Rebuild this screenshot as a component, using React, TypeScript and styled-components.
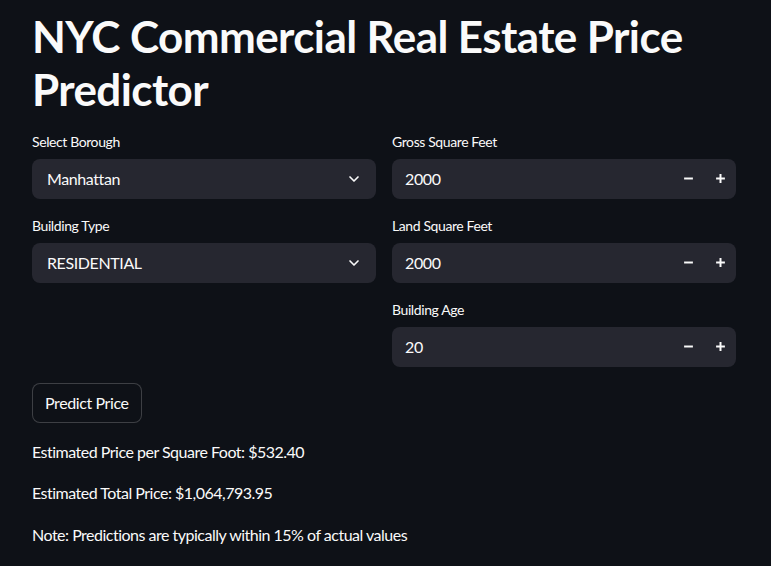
import styled, { createGlobalStyle } from "styled-components";

const GlobalStyle = createGlobalStyle`
  html, body {
    margin: 0;
    padding: 0;
    background: #0e1117;
  }
  body {
    font-family: "Source Sans Pro", Lato, "Noto Sans", sans-serif;
    color: #fafafa;
  }
`;

const Main = styled.main`
  width: 771px;
  height: 566px;
  box-sizing: border-box;
  padding: 10px 35px 0 32px;
  display: flex;
  flex-direction: column;
  gap: 16px;
  overflow: hidden;
`;

const Title = styled.h1`
  margin: 0 0 -1px;
  font-size: 44px;
  font-weight: 700;
  line-height: 1.2;
  letter-spacing: -0.6px;
`;

const Columns = styled.div`
  display: grid;
  grid-template-columns: 344px 344px;
  column-gap: 16px;
  align-items: start;
`;

const Column = styled.div`
  display: flex;
  flex-direction: column;
  gap: 16px;
`;

const Field = styled.div`
  display: flex;
  flex-direction: column;
`;

const Label = styled.label`
  font-size: 14px;
  line-height: 21px;
  margin-bottom: 7px;
  letter-spacing: -0.4px;
`;

const Box = styled.div`
  height: 40px;
  box-sizing: border-box;
  background: #262730;
  border-radius: 8px;
  display: flex;
  align-items: center;
  font-size: 16px;
  letter-spacing: -0.4px;
`;

const SelectValue = styled.span`
  flex: 1;
  padding-left: 15px;
`;

const Chevron = styled.span`
  width: 40px;
  display: flex;
  justify-content: center;
  padding-right: 2px;
`;

const NumberValue = styled.span`
  flex: 1;
  padding-left: 13px;
`;

const Stepper = styled.button`
  width: 32px;
  height: 40px;
  border: none;
  background: transparent;
  color: #fafafa;
  display: flex;
  align-items: center;
  justify-content: center;
  padding: 0;
`;

const Button = styled.button`
  align-self: flex-start;
  height: 40px;
  padding: 0 12px;
  background: #0e1117;
  color: #fafafa;
  border: 1px solid rgba(250, 250, 250, 0.2);
  border-radius: 8px;
  font-family: inherit;
  font-size: 16px;
  letter-spacing: -0.4px;
`;

const Results = styled.div`
  display: flex;
  flex-direction: column;
  gap: 16px;
`;

const Text = styled.p`
  margin: 0;
  font-size: 16px;
  line-height: 25.6px;
  letter-spacing: -0.5px;
`;

function ChevronIcon() {
  return (
    <svg width="16" height="16" viewBox="0 0 24 24" fill="none" stroke="#fafafa" strokeWidth="2.5" strokeLinecap="round" strokeLinejoin="round">
      <path d="M6 9l6 6 6-6" />
    </svg>
  );
}

function MinusIcon() {
  return (
    <svg width="11" height="11" viewBox="0 0 10 10" stroke="#fafafa" strokeWidth="1.8">
      <path d="M1 5h8" />
    </svg>
  );
}

function PlusIcon() {
  return (
    <svg width="11" height="11" viewBox="0 0 10 10" stroke="#fafafa" strokeWidth="1.8">
      <path d="M1 5h8M5 1v8" />
    </svg>
  );
}

function SelectField({ label, value }: { label: string; value: string }) {
  return (
    <Field>
      <Label>{label}</Label>
      <Box>
        <SelectValue>{value}</SelectValue>
        <Chevron>
          <ChevronIcon />
        </Chevron>
      </Box>
    </Field>
  );
}

function NumberField({ label, value }: { label: string; value: string }) {
  return (
    <Field>
      <Label>{label}</Label>
      <Box>
        <NumberValue>{value}</NumberValue>
        <Stepper>
          <MinusIcon />
        </Stepper>
        <Stepper>
          <PlusIcon />
        </Stepper>
      </Box>
    </Field>
  );
}

export default function App() {
  return (
    <>
      <GlobalStyle />
      <Main>
        <Title>NYC Commercial Real Estate Price Predictor</Title>
        <Columns>
          <Column>
            <SelectField label="Select Borough" value="Manhattan" />
            <SelectField label="Building Type" value="RESIDENTIAL" />
          </Column>
          <Column>
            <NumberField label="Gross Square Feet" value="2000" />
            <NumberField label="Land Square Feet" value="2000" />
            <NumberField label="Building Age" value="20" />
          </Column>
        </Columns>
        <Button>Predict Price</Button>
        <Results>
          <Text>Estimated Price per Square Foot: $532.40</Text>
          <Text>Estimated Total Price: $1,064,793.95</Text>
          <Text>Note: Predictions are typically within 15% of actual values</Text>
        </Results>
      </Main>
    </>
  );
}
